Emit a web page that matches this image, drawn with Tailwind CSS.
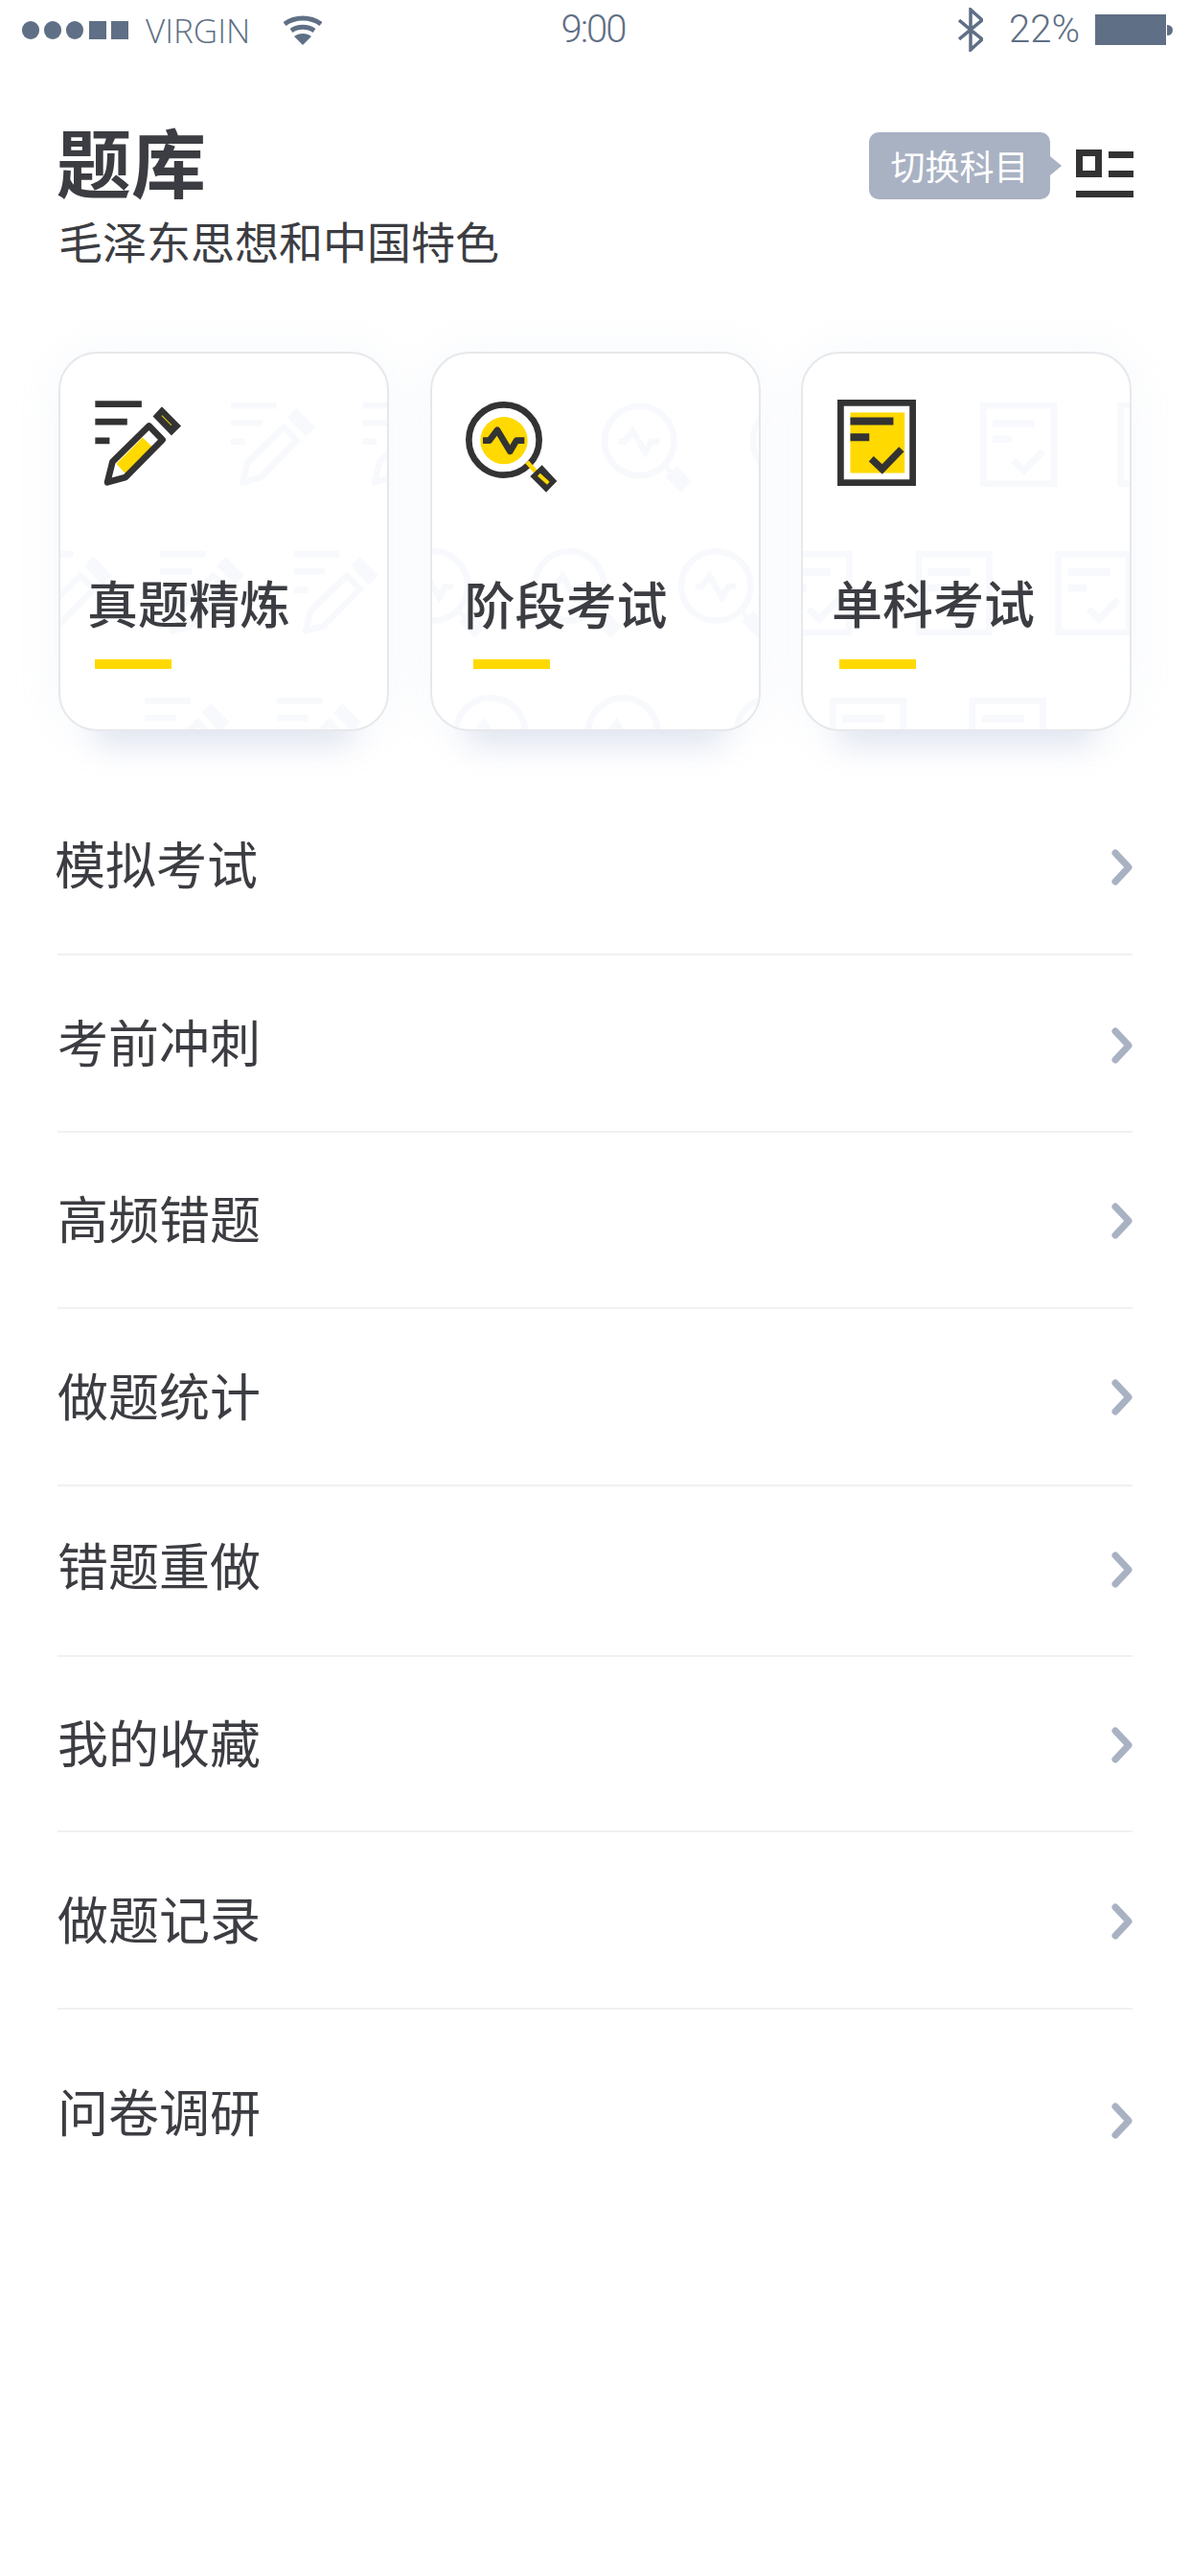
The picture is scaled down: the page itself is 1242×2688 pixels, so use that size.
<!DOCTYPE html>
<html lang="zh-CN">
<head>
    <meta charset="UTF-8">
    <meta name="viewport" content="width=device-width, initial-scale=1.0">
    <title>题库</title>
    <script src="https://cdn.jsdelivr.net/npm/@tailwindcss/browser@4"></script>
</head>
<body class="w-[1242px] h-[2688px] overflow-hidden bg-white text-[#3c3d42] font-['Noto_Sans_CJK_SC','Noto_Sans',sans-serif]">
    <!-- shapes reused by the card icons' faint background -->
    <svg class="hidden" aria-hidden="true">
        <defs>
            <g id="mark-pen" fill="none" stroke="currentColor">
                <path d="M177 214H322M177 269H277M177 328H222" stroke-width="20"/>
                <path d="M215 458L231 394L345 282L387 325L272 442Z" stroke-width="20" stroke-linejoin="round"/>
                <path d="M385 222L445 282L415 312L357 252Z" fill="currentColor" stroke="none"/>
            </g>
            <g id="mark-lens" fill="none" stroke="currentColor">
                <circle cx="286" cy="326" r="110" stroke-width="20"/>
                <path d="M220 328H240L265 295L305 362L325 328H350" stroke-width="20"/>
                <path d="M405 405L452 455L418 490L368 440Z" fill="currentColor" stroke="none"/>
                <path d="M358 395L385 425" stroke-width="14"/>
            </g>
            <g id="mark-sheet" fill="none" stroke="currentColor">
                <rect x="173" y="214" width="224" height="248" stroke-width="20"/>
                <path d="M203 271H337M203 321H262" stroke-width="24"/>
                <path d="M268 388L302 420L362 358" stroke-width="22"/>
            </g>
        </defs>
    </svg>

    <!-- Status bar -->
    <div class="grid grid-cols-3 items-center h-[62px] text-[#5f6f85] font-['Roboto','Noto_Sans',sans-serif] font-light">
        <div class="flex items-center pl-[23px]">
            <div class="flex items-center gap-[5px]">
                <span class="w-[18px] h-[19px] rounded-full bg-[#5f6f85]"></span>
                <span class="w-[18px] h-[19px] rounded-full bg-[#5f6f85]"></span>
                <span class="w-[18px] h-[19px] rounded-full bg-[#5f6f85]"></span>
                <span class="ml-[1px] w-[18px] h-[19px] bg-[#5f6f85]"></span>
                <span class="w-[18px] h-[19px] bg-[#5f6f85]"></span>
            </div>
            <span class="ml-[18px] text-[35px] leading-none font-['Open_Sans','Noto_Sans',sans-serif]">VIRGIN</span>
            <svg class="ml-[35px] w-[40px] h-[31px]" viewBox="0 0 40 31" fill="none" stroke="#5f6f85" stroke-width="5">
                <path d="M1 9C12 1 28 1 39 9"/>
                <path d="M8 16C15 11 25 11 32 16"/>
                <path d="M20 31L11 22C16 18 24 18 29 22Z" fill="#5f6f85" stroke="none"/>
            </svg>
        </div>
        <div class="text-center text-[40px] leading-none tracking-[-2px] -ml-[4px]">9:00</div>
        <div class="flex items-center justify-end pr-[18px]">
            <svg class="w-[26px] h-[46px]" viewBox="0 0 26 46" fill="none" stroke="#5f6f85" stroke-width="3.5">
                <path d="M1 13L25 33L13 44V2L25 13L1 33"/>
            </svg>
            <span class="ml-[27px] text-[40px] leading-none">22%</span>
            <div class="ml-[16px] flex items-center">
                <span class="w-[74px] h-[32px] bg-[#5f6f85]"></span>
                <span class="ml-[1px] w-[6px] h-[11px] rounded-r-full bg-[#5f6f85]"></span>
            </div>
        </div>
    </div>

    <!-- Page header -->
    <header class="mt-[60px] px-[59px] flex justify-between items-start">
        <div>
            <h1 class="text-[78px] leading-[90px] font-bold">题库</h1>
            <p class="mt-[8px] mb-[3px] text-[46px] leading-[60px] ml-[2px]">毛泽东思想和中国特色</p>
        </div>
        <div class="mt-[16px] flex items-center">
            <div class="relative w-[189px] h-[70px] pb-[3px] rounded-[10px] bg-[#a9b2c3] text-white text-[36px] flex items-center justify-center">
                切换科目
                <span class="absolute left-full top-[25px] border-y-[10px] border-l-[12px] border-y-transparent border-l-[#a9b2c3]"></span>
            </div>
            <svg class="ml-[27px] w-[60px] h-[50px] mt-[15px]" viewBox="0 0 60 50" fill="#333">
                <path fill-rule="evenodd" d="M0 0H27V29H0ZM7 7V22H20V7Z"/>
                <rect x="34" y="2" width="26" height="7"/>
                <rect x="34" y="22" width="26" height="7"/>
                <rect x="0" y="43" width="60" height="7"/>
            </svg>
        </div>
    </header>

    <!-- Practice cards -->
    <section class="mt-[84px] pl-[61px] pr-[61px] flex justify-between">
        <div class="relative w-[345px] h-[396px] rounded-[40px] border-2 border-[#e6e8eb] bg-white shadow-[0_0_50px_rgba(190,205,230,0.14),0_55px_30px_-40px_rgba(170,185,215,0.32)]">
            <div class="relative h-full rounded-[38px] overflow-hidden">
                <svg class="absolute inset-0 w-full h-full text-[#f7f9fc]" viewBox="62 52 1036 1186">
                    <use href="#mark-pen" x="425"/><use href="#mark-pen" x="843"/>
                    <use href="#mark-pen" x="-219" y="471"/><use href="#mark-pen" x="201" y="471"/><use href="#mark-pen" x="625" y="471"/>
                    <use href="#mark-pen" x="153" y="936"/><use href="#mark-pen" x="571" y="936"/>
                </svg>
                <div class="relative pt-[48px] pl-[34px]">
                    <svg class="w-[97px] h-[97px]" viewBox="170 200 290 290">
                        <path d="M177 214H322M177 269H277M177 328H222" stroke="#333" stroke-width="20" fill="none"/>
                        <path d="M325 318L358 350L272 432L243 400Z" fill="#ffd900"/>
                        <path d="M215 458L231 394L345 282L387 325L272 442Z" stroke="#333" stroke-width="20" stroke-linejoin="round" fill="none"/>
                        <path d="M385 222L445 282L415 312L357 252Z" fill="#333"/>
                        <path d="M385 250L415 280" stroke="#ffd900" stroke-width="3"/>
                    </svg>
                </div>
                <h2 class="relative mt-[84px] pl-[28px] text-[53px] leading-[60px] font-medium">真题精炼</h2>
                <div class="relative mt-[30px] ml-[36px] w-[80px] h-[10px] bg-[#ffd900]"></div>
            </div>
        </div>

        <div class="relative w-[345px] h-[396px] rounded-[40px] border-2 border-[#e6e8eb] bg-white shadow-[0_0_50px_rgba(190,205,230,0.14),0_55px_30px_-40px_rgba(170,185,215,0.32)]">
            <div class="relative h-full rounded-[38px] overflow-hidden">
                <svg class="absolute inset-0 w-full h-full text-[#f7f9fc]" viewBox="56 52 1036 1186">
                    <use href="#mark-lens" x="427"/><use href="#mark-lens" x="897"/>
                    <use href="#mark-lens" x="-227" y="460"/><use href="#mark-lens" x="205" y="460"/><use href="#mark-lens" x="670" y="460"/>
                    <use href="#mark-lens" x="-45" y="925"/><use href="#mark-lens" x="375" y="925"/><use href="#mark-lens" x="845" y="925"/>
                </svg>
                <div class="relative pt-[48px] pl-[33px]">
                    <svg class="w-[100px] h-[97px]" viewBox="160 200 300 291">
                        <circle cx="286" cy="328" r="74" fill="#ffd900"/>
                        <circle cx="286" cy="326" r="110" stroke="#333" stroke-width="20" fill="none"/>
                        <path d="M220 328H240L265 295L305 362L325 328H350" stroke="#333" stroke-width="20" stroke-linejoin="round" fill="none"/>
                        <path d="M358 395L385 425" stroke="#ffd900" stroke-width="14"/>
                        <path d="M405 405L452 455L418 490L368 440Z" fill="#333"/>
                        <path d="M395 435L425 462" stroke="#ffd900" stroke-width="12"/>
                    </svg>
                </div>
                <h2 class="relative mt-[85px] pl-[34px] text-[53px] leading-[60px] font-medium">阶段考试</h2>
                <div class="relative mt-[29px] ml-[43px] w-[80px] h-[10px] bg-[#ffd900]"></div>
            </div>
        </div>

        <div class="relative w-[345px] h-[396px] rounded-[40px] border-2 border-[#e6e8eb] bg-white shadow-[0_0_50px_rgba(190,205,230,0.14),0_55px_30px_-40px_rgba(170,185,215,0.32)]">
            <div class="relative h-full rounded-[38px] overflow-hidden">
                <svg class="absolute inset-0 w-full h-full text-[#f7f9fc]" viewBox="48 52 1036 1186">
                    <use href="#mark-sheet" x="447"/><use href="#mark-sheet" x="882"/>
                    <use href="#mark-sheet" x="-202" y="471"/><use href="#mark-sheet" x="242" y="471"/><use href="#mark-sheet" x="685" y="471"/>
                    <use href="#mark-sheet" x="-30" y="936"/><use href="#mark-sheet" x="412" y="936"/>
                </svg>
                <div class="relative pt-[48px] pl-[36px]">
                    <svg class="w-[82px] h-[90px]" viewBox="163 204 244 268">
                        <rect x="173" y="214" width="224" height="248" stroke="#333" stroke-width="20" fill="none"/>
                        <rect x="203" y="244" width="169" height="188" fill="#ffd900"/>
                        <path d="M203 271H337M203 321H262" stroke="#333" stroke-width="24"/>
                        <path d="M268 388L302 420L362 358" stroke="#333" stroke-width="22" fill="none"/>
                    </svg>
                </div>
                <h2 class="relative mt-[91px] pl-[30px] text-[53px] leading-[60px] font-medium">单科考试</h2>
                <div class="relative mt-[30px] ml-[38px] w-[80px] h-[10px] bg-[#ffd900]"></div>
            </div>
        </div>
    </section>

    <!-- Menu list -->
    <ul class="mt-[48px] mx-[60px] text-[53px] leading-[60px]">
        <li class="h-[186px] flex items-center justify-between border-b-2 border-[#f1f1f3]">
            <span class="-ml-[3px] mb-[6px]">模拟考试</span>
            <svg class="w-[22px] h-[38px] mt-[4px]" viewBox="0 0 22 38" fill="none" stroke="#a9b2c3" stroke-width="7" stroke-linecap="round" stroke-linejoin="round"><path d="M4 4L18 19L4 34"/></svg>
        </li>
        <li class="h-[185px] flex items-center justify-between border-b-2 border-[#f1f1f3]">
            <span class="mb-[6px]">考前冲刺</span>
            <svg class="w-[22px] h-[38px] mt-[4px]" viewBox="0 0 22 38" fill="none" stroke="#a9b2c3" stroke-width="7" stroke-linecap="round" stroke-linejoin="round"><path d="M4 4L18 19L4 34"/></svg>
        </li>
        <li class="h-[184px] flex items-center justify-between border-b-2 border-[#f1f1f3]">
            <span class="mb-[6px]">高频错题</span>
            <svg class="w-[22px] h-[38px] mt-[2px]" viewBox="0 0 22 38" fill="none" stroke="#a9b2c3" stroke-width="7" stroke-linecap="round" stroke-linejoin="round"><path d="M4 4L18 19L4 34"/></svg>
        </li>
        <li class="h-[185px] flex items-center justify-between border-b-2 border-[#f1f1f3]">
            <span class="mb-[6px]">做题统计</span>
            <svg class="w-[22px] h-[38px]" viewBox="0 0 22 38" fill="none" stroke="#a9b2c3" stroke-width="7" stroke-linecap="round" stroke-linejoin="round"><path d="M4 4L18 19L4 34"/></svg>
        </li>
        <li class="h-[178px] flex items-center justify-between border-b-2 border-[#f1f1f3]">
            <span class="mb-[14px]">错题重做</span>
            <svg class="w-[22px] h-[38px] mb-[2px]" viewBox="0 0 22 38" fill="none" stroke="#a9b2c3" stroke-width="7" stroke-linecap="round" stroke-linejoin="round"><path d="M4 4L18 19L4 34"/></svg>
        </li>
        <li class="h-[183px] flex items-center justify-between border-b-2 border-[#f1f1f3]">
            <span class="mb-[6px]">我的收藏</span>
            <svg class="w-[22px] h-[38px] mt-[2px]" viewBox="0 0 22 38" fill="none" stroke="#a9b2c3" stroke-width="7" stroke-linecap="round" stroke-linejoin="round"><path d="M4 4L18 19L4 34"/></svg>
        </li>
        <li class="h-[185px] flex items-center justify-between border-b-2 border-[#f1f1f3]">
            <span class="mb-[6px]">做题记录</span>
            <svg class="w-[22px] h-[38px] mt-[2px]" viewBox="0 0 22 38" fill="none" stroke="#a9b2c3" stroke-width="7" stroke-linecap="round" stroke-linejoin="round"><path d="M4 4L18 19L4 34"/></svg>
        </li>
        <li class="h-[216px] flex items-center justify-between">
            <span class="mb-[6px]">问卷调研</span>
            <svg class="w-[22px] h-[38px] mt-[16px]" viewBox="0 0 22 38" fill="none" stroke="#a9b2c3" stroke-width="7" stroke-linecap="round" stroke-linejoin="round"><path d="M4 4L18 19L4 34"/></svg>
        </li>
    </ul>
</body>
</html>
